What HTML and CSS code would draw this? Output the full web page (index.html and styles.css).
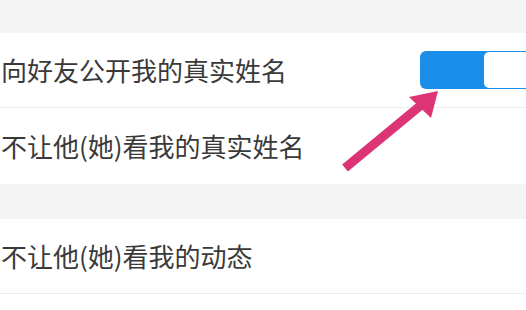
FILE: index.html
```html
<!DOCTYPE html>
<html lang="zh">
<head>
<meta charset="utf-8">
<link rel="stylesheet" href="styles.css">
</head>
<body>
<div class="page">
  <div class="gap gap-top"></div>
  <div class="row row-first">
    <span class="label">向好友公开我的真实姓名</span>
    <div class="toggle"><div class="knob"></div></div>
  </div>
  <div class="row row-second">
    <span class="label">不让他(她)看我的真实姓名</span>
  </div>
  <div class="gap gap-mid"></div>
  <div class="row row-third">
    <span class="label">不让他(她)看我的动态</span>
  </div>
  <svg class="arrow" width="526" height="310" viewBox="0 0 526 310">
    <line x1="345" y1="168" x2="420" y2="106" stroke="#dc3474" stroke-width="9"/>
    <polygon points="438,91 409,97 431,118" fill="#dc3474"/>
  </svg>
</div>
</body>
</html>
```
FILE: styles.css
```css
html, body {
  margin: 0;
  padding: 0;
  background: #ffffff;
  overflow: hidden;
}
.page {
  position: relative;
  width: 526px;
  height: 310px;
  overflow: hidden;
  font-family: "Noto Sans CJK SC", "Noto Sans", sans-serif;
  color: #3a3a3a;
}
.gap {
  background: #f4f4f4;
}
.gap-top {
  height: 33px;
}
.gap-mid {
  height: 35px;
}
.row {
  display: flex;
  align-items: center;
  justify-content: space-between;
  background: #ffffff;
  box-sizing: border-box;
}
.row-first {
  height: 75px;
  border-bottom: 1px solid #ededed;
}
.row-second {
  height: 76px;
}
.row-third {
  height: 75px;
  border-bottom: 1px solid #ededed;
}
.label {
  font-size: 26px;
  line-height: 30px;
  padding-left: 1px;
  white-space: nowrap;
}
.toggle {
  width: 120px;
  height: 38px;
  margin-right: -14px;
  background: #1a8ee8;
  border-radius: 6px;
  box-sizing: border-box;
  padding: 1px 1px 1px 64px;
  display: flex;
}
.knob {
  flex: 1;
  background: #ffffff;
  border-radius: 5px;
}
.arrow {
  position: absolute;
  left: 0;
  top: 0;
}
```
